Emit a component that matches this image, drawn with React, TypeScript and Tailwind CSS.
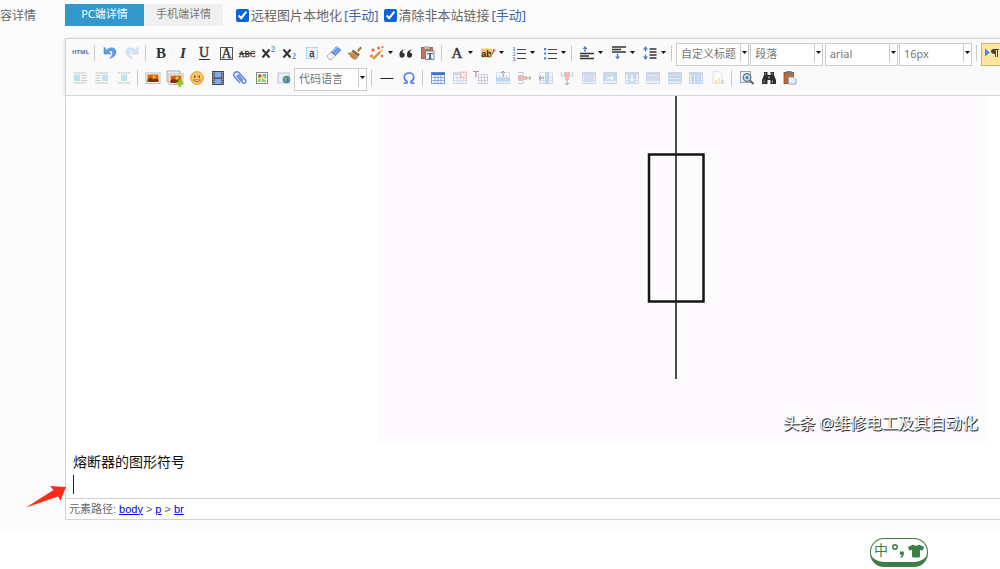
import type { ReactNode } from "react";
import { FaTshirt } from "react-icons/fa";

type Tool = { label: string; icon: ReactNode; menu?: boolean; off?: boolean };

const BLUE = "#4a7fe0";
const INK = "#333333";

function Glyph({ children }: { children: ReactNode }) {
    return (
        <svg viewBox="0 0 16 16" className="h-4 w-4 shrink-0 overflow-visible">
            {children}
        </svg>
    );
}

function Letter({ x = 8, y = 13, size = 15, fill = INK, children, ...rest }: any) {
    return (
        <text x={x} y={y} fontSize={size} fill={fill} textAnchor="middle" fontFamily="Liberation Serif, serif" {...rest}>
            {children}
        </text>
    );
}

function Caret() {
    return (
        <svg viewBox="0 0 5 3" className="h-[3px] w-[5px] shrink-0">
            <path d="M0 0h5L2.5 3z" fill="#111" />
        </svg>
    );
}

// cell grid shared by the table tools
function Grid({ head = "#9fb6dc", line = "#9db4d8", children }: { head?: string; line?: string; children?: ReactNode }) {
    return (
        <Glyph>
            <rect x="1.500" y="2.500" width="13" height="11" fill="#f5f8fd" stroke={line} />
            <rect x="1.500" y="2.500" width="13" height="2.500" fill={head} />
            <path d="M2 7.500h12M2 10.500h12M5 5v8.500M8 5v8.500M11 5v8.500" stroke={line} strokeWidth=".8" />
            {children}
        </Glyph>
    );
}

function AlignBlock({ x, wide }: { x: number; wide?: boolean }) {
    return (
        <Glyph>
            <path d="M1.500 3h13M1.500 13h13" stroke="#999" />
            {!wide && <path d={x < 5 ? "M9 5.500h5.500M9 8h5.500M9 10.500h5.500" : "M1.500 5.500h5M1.500 8h5M1.500 10.500h5"} stroke="#999" />}
            <rect x={x} y="4.500" width="6" height="6.500" fill="#7cd0f2" />
        </Glyph>
    );
}

function Photo({ add }: { add?: boolean }) {
    return (
        <Glyph>
            {add && <path d="M0 1h13v11H0z" fill="#eee" stroke="#999" strokeWidth=".8" />}
            <rect x={add ? 2 : 1} y={add ? 4 : 3} width="14" height="10.500" fill="#fff" stroke="#aaa" strokeWidth=".8" />
            <rect x={add ? 3.5 : 2.5} y={add ? 5.5 : 4.5} width="11" height="7.500" fill="#d8660c" />
            <path d={add ? "M3.500 10.500l3-2 3 2 2-1 3 1V13h-11z" : "M2.500 9.500l3-2 3 2 2-1 3 1V12h-11z"} fill="#7c340a" />
            <circle cx={add ? 10 : 9} cy={add ? 8 : 7} r="1.300" fill="#ffd35c" />
            {add && <path d="M11.500 9.500h2.500V12h2v2.500h-2V17h-2.500v-2.500h-2V12h2z" fill="#8dcc1c" />}
        </Glyph>
    );
}

function Lines({ y }: { y: number }) {
    return <path d={`M1 ${y}h14M1 ${y + 2.5}h9M1 ${y + 5}h14`} stroke={INK} strokeWidth="1.3" />;
}

const historyTools: Tool[] = [
    {
        label: "撤销",
        icon: (
            <Glyph>
                <path d="M2 2v7h7L6.500 6.500Q11 4.500 10.500 8.500 10.200 11.500 7.500 13.500 14.500 11 14 6.500 13 1.500 7 3.200L4.600 5z" fill="#5b9fe6" stroke="#3f82d0" strokeWidth=".5" />
            </Glyph>
        ),
    },
    {
        label: "重做",
        off: true,
        icon: (
            <Glyph>
                <path d="M14 2v7H7l2.500-2.500Q5 4.500 5.500 8.500 5.800 11.500 8.500 13.500 1.500 11 2 6.500 3 1.500 9 3.200L11.400 5z" fill="#a5d0f2" stroke="#7bb6e8" strokeWidth=".5" />
            </Glyph>
        ),
    },
];

const textTools: Tool[] = [
    { label: "加粗", icon: <Glyph><Letter size={15} fontWeight="bold">B</Letter></Glyph> },
    { label: "斜体", icon: <Glyph><Letter size={15} fontWeight="bold" fontStyle="italic">I</Letter></Glyph> },
    {
        label: "下划线",
        icon: (
            <Glyph>
                <Letter y={12} size={14} stroke={INK} strokeWidth=".4">U</Letter>
                <path d="M3 14.500h11" stroke={INK} />
            </Glyph>
        ),
    },
    {
        label: "字符边框",
        icon: (
            <Glyph>
                <rect x="2.500" y="2.500" width="12" height="12" fill="none" stroke="#555" />
                <Letter x={8.5} size={14} stroke={INK} strokeWidth=".3">A</Letter>
            </Glyph>
        ),
    },
    {
        label: "删除线",
        icon: (
            <Glyph>
                <Letter y={11.5} size={8} stroke={INK} strokeWidth=".3">ABC</Letter>
                <path d="M0 8.500h16" stroke={INK} />
            </Glyph>
        ),
    },
    {
        label: "上标",
        icon: (
            <Glyph>
                <path d="M1.500 4.500l7 8M8.500 4.500l-7 8" stroke={INK} strokeWidth="2" />
                <Letter x={12} y={7} size={8} fill={BLUE} fontWeight="bold">2</Letter>
            </Glyph>
        ),
    },
    {
        label: "下标",
        icon: (
            <Glyph>
                <path d="M1.500 4.500l7 8M8.500 4.500l-7 8" stroke={INK} strokeWidth="2" />
                <Letter x={12} y={14} size={8} fill={BLUE} fontWeight="bold">2</Letter>
            </Glyph>
        ),
    },
    {
        label: "清除格式",
        icon: (
            <Glyph>
                <rect x="2.500" y="2.500" width="11" height="11" fill="#eef5ff" stroke="#8bb8f0" strokeDasharray="1.500 1" />
                <Letter y={11.5} size={12} stroke={INK} strokeWidth=".3">a</Letter>
            </Glyph>
        ),
    },
    {
        label: "橡皮擦",
        icon: (
            <Glyph>
                <path d="M1 11l4-4 4.500 3.500-3.500 4H3z" fill="#f4f4f6" stroke="#9aa5b8" strokeWidth=".8" />
                <path d="M5 7l5.500-5.500 4.500 3.500-5.500 5.500z" fill="#6f9fe6" stroke="#5580c8" strokeWidth=".8" />
                <path d="M6 6.500L11 2" stroke="#c4daf8" />
            </Glyph>
        ),
    },
    {
        label: "格式刷",
        icon: (
            <Glyph>
                <path d="M10 5.500l3.500-4 1.500 1.500-3.500 4z" fill="#b4742c" />
                <path d="M6 4.500l7 5-2 2-6.500-4.500z" fill="#8a6a48" />
                <path d="M1 8h3.500l6.500 4-2.500 2.500L5 13z" fill="#d89a50" stroke="#a86d2c" strokeWidth=".6" />
                <path d="M3 8.500l4 5M5.500 9l3.500 4" stroke="#9b6225" strokeWidth=".6" />
            </Glyph>
        ),
    },
    {
        label: "自动排版",
        menu: true,
        icon: (
            <Glyph>
                <path d="M4 14L13 5" stroke="#d79331" strokeWidth="2.400" />
                <path d="M11 7l2-2" stroke="#f4d38c" strokeWidth="2.400" />
                <path d="M4 2.500l.8 1.700 1.700.8-1.700.8L4 7.500l-.8-1.700L1.500 5l1.700-.8z" fill="#e65d3b" />
                <circle cx="9.500" cy="3" r="1.600" fill="#ee7c32" />
                <circle cx="13.500" cy="2" r="1" fill="#e65d3b" />
                <circle cx="2.500" cy="11" r="1.600" fill="#ee7c32" />
                <circle cx="13" cy="11" r="1.200" fill="#e65d3b" />
            </Glyph>
        ),
    },
    {
        label: "引用",
        icon: (
            <Glyph>
                <path d="M7 4.200Q4.500 5 4.300 7.500A2.600 2.600 0 1 1 1.500 10Q1 5 7 4.200zM14.500 4.200Q12 5 11.800 7.500A2.600 2.600 0 1 1 9 10Q8.500 5 14.500 4.200z" fill={INK} />
            </Glyph>
        ),
    },
    {
        label: "纯文本粘贴",
        icon: (
            <Glyph>
                <rect x="1.500" y="2.500" width="11" height="11" fill="#b57a55" stroke="#82482a" strokeWidth=".7" />
                <rect x="4.500" y="1" width="5" height="3" fill="#b8bcc4" />
                <rect x="5.500" y="6" width="8.500" height="8.500" fill="#eef3fb" stroke="#667799" strokeWidth=".8" />
                <Letter x={10} y={13.5} size={9} fontWeight="bold">T</Letter>
            </Glyph>
        ),
    },
];

const colorTools: Tool[] = [
    { label: "字体颜色", menu: true, icon: <Glyph><Letter size={15} stroke={INK} strokeWidth=".4">A</Letter></Glyph> },
    {
        label: "背景色",
        menu: true,
        icon: (
            <Glyph>
                <rect x="1" y="3.500" width="11" height="9" rx="1" fill="#fcc461" />
                <text x="6.500" y="11.500" fontSize="9" fill="#222" textAnchor="middle" fontWeight="bold" fontFamily="Liberation Sans, sans-serif">ab</text>
                <path d="M9.500 12.500l4-6" stroke="#c08850" strokeWidth="1.800" />
                <circle cx="14" cy="5.500" r="1.400" fill="#ec5f52" />
            </Glyph>
        ),
    },
    {
        label: "有序列表",
        menu: true,
        icon: (
            <Glyph>
                <path d="M6 4.500h9M6 8.500h9M6 13.500h9" stroke="#444" />
                <Letter x={3} y={5.5} size={6} fill={BLUE} fontWeight="bold">1</Letter>
                <Letter x={3} y={10.5} size={6} fill={BLUE} fontWeight="bold">2</Letter>
                <Letter x={3} y={15.5} size={6} fill={BLUE} fontWeight="bold">3</Letter>
            </Glyph>
        ),
    },
    {
        label: "无序列表",
        menu: true,
        icon: (
            <Glyph>
                <path d="M6 4.500h9M6 8.500h9M6 13.500h9" stroke="#444" />
                <path d="M2 3h2.200v2.200H2zM2 7.400h2.200v2.200H2zM2 12.300h2.200v2.200H2z" fill={BLUE} />
            </Glyph>
        ),
    },
];

const spacingTools: Tool[] = [
    {
        label: "段前距",
        menu: true,
        icon: (
            <Glyph>
                <Lines y={8.500} />
                <path d="M6 1l2.500 3h-1.800v3H5.300V4H3.500z" fill={BLUE} />
            </Glyph>
        ),
    },
    {
        label: "段后距",
        menu: true,
        icon: (
            <Glyph>
                <Lines y={2} />
                <path d="M6.500 14.500L4 11.500h1.800v-3h1.400v3H9z" fill={BLUE} />
            </Glyph>
        ),
    },
    {
        label: "行间距",
        menu: true,
        icon: (
            <Glyph>
                <path d="M7.500 4h7M7.500 7h7M7.500 10h7M7.500 13h7" stroke={INK} strokeWidth="1.300" />
                <path d="M3.500 1L6 4.500H4.200v2H2.800v-2H1zM3.500 15L1 11.500h1.800v-2h1.400v2H6z" fill={BLUE} />
            </Glyph>
        ),
    },
];

const floatTools: Tool[] = [
    { label: "左浮动", off: true, icon: <AlignBlock x={2} /> },
    { label: "右浮动", off: true, icon: <AlignBlock x={8} /> },
    { label: "居中", off: true, icon: <AlignBlock x={5} wide /> },
];

const insertTools: Tool[] = [
    { label: "单图上传", icon: <Photo /> },
    { label: "多图上传", icon: <Photo add /> },
    {
        label: "表情",
        icon: (
            <Glyph>
                <circle cx="8" cy="8" r="6.300" fill="#fdc85c" stroke="#e58f22" />
                <path d="M5.700 5.500v2.200M10.300 5.500v2.200" stroke="#7b4a10" strokeWidth="1.500" />
                <path d="M4.300 10q3.700 3.500 7.400 0z" fill="#fff" stroke="#a4600f" strokeWidth=".8" />
            </Glyph>
        ),
    },
    {
        label: "视频",
        icon: (
            <Glyph>
                <rect x="2" y="1" width="12" height="14" fill="#444" />
                <path d="M3.200 2v13M12.800 2v13" stroke="#ddd" strokeDasharray="1.200 1" />
                <path d="M4.500 2h7v5.500h-7zM4.500 8.800h7V14h-7z" fill="#86a9ee" />
            </Glyph>
        ),
    },
    {
        label: "附件",
        icon: (
            <Glyph>
                <path d="M4.500 5.500l6 7q1.500 1.500 2.800.3 1.300-1.300 0-3L7 2.800Q5 1 3 2.600T2.300 6.500l5.500 6.300M6 4.500l5 6" fill="none" stroke="#5582e8" strokeWidth="1.400" />
            </Glyph>
        ),
    },
    {
        label: "地图",
        icon: (
            <Glyph>
                <rect x="2.500" y="2.500" width="11" height="11" fill="#fff" stroke="#888" />
                <path d="M4 4h8v8H4z" fill="#8ccf74" />
                <path d="M4 9l4-2 4 3M8 4l-1 8" stroke="#fff3a0" strokeWidth="1.200" fill="none" />
                <path d="M9 4h3v3z" fill="#6aa7ea" />
                <circle cx="6" cy="6" r="1.500" fill="#e34c35" />
            </Glyph>
        ),
    },
    {
        label: "插入框架",
        icon: (
            <Glyph>
                <rect x="2" y="3" width="11" height="10" fill="#eaf0f8" stroke="#b0bac8" strokeWidth=".8" />
                <circle cx="10.500" cy="9.500" r="3.800" fill="#3f85be" />
                <path d="M8 7q3-1 3 1.500T9 12Q7 10 8 7zM12 7l2 2-1.500 2z" fill="#68b36d" />
            </Glyph>
        ),
    },
];

const lineTools: Tool[] = [
    { label: "分隔线", icon: <Glyph><path d="M1.500 8.500h13" stroke="#222" /></Glyph> },
    {
        label: "特殊字符",
        icon: (
            <Glyph>
                <path d="M2.500 13h3.500v-1.500Q3.200 9.800 3.200 7 3.500 3 8 3t4.800 4q0 2.800-2.800 4.500V13h3.500" fill="none" stroke="#4b7cf0" strokeWidth="1.600" />
            </Glyph>
        ),
    },
];

const tableTools: Tool[] = [
    { label: "插入表格", icon: <Grid head="#3d6fd0" line="#7c9cd8" /> },
    {
        label: "删除表格",
        off: true,
        icon: (
            <Grid>
                <rect x="8" y="1.500" width="7" height="7" fill="#ee8c8c" />
                <path d="M9.500 3l4 4M13.500 3l-4 4" stroke="#fff" strokeWidth="1.300" />
            </Grid>
        ),
    },
    {
        label: "表格标题",
        off: true,
        icon: (
            <Glyph>
                <path d="M0 1.500h6M3 1.500v6" stroke="#444" strokeWidth="1.200" />
                <path d="M5.500 4.500h9v9h-9zM5.500 7.500h9M5.500 10.500h9M8.500 4.500v9M11.500 4.500v9" fill="none" stroke="#9aa8bf" />
            </Glyph>
        ),
    },
    {
        label: "前插入行",
        off: true,
        icon: (
            <Grid head="#eef3fb">
                <rect x="1" y="8" width="14" height="3.500" fill="#7db6ef" />
                <path d="M8 7V1M6 3l2-2 2 2" fill="none" stroke="#444" />
            </Grid>
        ),
    },
    {
        label: "删除行",
        off: true,
        icon: (
            <Glyph>
                <path d="M2 2.500h5v3H2M2 13.500h5v-3H2" fill="none" stroke="#999" />
                <rect x="2" y="6" width="9" height="4" fill="#ee7777" />
                <path d="M10 8h5M13 6l2 2-2 2" fill="none" stroke="#555" />
            </Glyph>
        ),
    },
    {
        label: "前插入列",
        off: true,
        icon: (
            <Grid head="#eef3fb">
                <rect x="7" y="2" width="4" height="12" fill="#7db6ef" />
                <path d="M6 8H1M3 6L1 8l2 2" fill="none" stroke="#444" />
            </Grid>
        ),
    },
    {
        label: "删除列",
        off: true,
        icon: (
            <Glyph>
                <path d="M2.500 2v4h3V2M13.500 2v4h-3V2" fill="none" stroke="#999" />
                <rect x="6" y="2" width="4" height="8" fill="#ee7777" />
                <path d="M8 10v5M6 13l2 2 2-2" fill="none" stroke="#555" />
            </Glyph>
        ),
    },
    {
        label: "合并单元格",
        off: true,
        icon: <Grid><rect x="3" y="5" width="10" height="7" fill="#b0c0ec" /></Grid>,
    },
    {
        label: "右合并单元格",
        off: true,
        icon: (
            <Grid>
                <rect x="2" y="5" width="12" height="5.500" fill="#8cc0f0" />
                <path d="M5 8h6M9 6l2 2-2 2" fill="none" stroke="#fff" strokeWidth="1.400" />
            </Grid>
        ),
    },
    {
        label: "下合并单元格",
        off: true,
        icon: (
            <Grid>
                <rect x="4" y="4.500" width="8" height="9" fill="#8cc0f0" />
                <path d="M8 5v6M6 9l2 2 2-2" fill="none" stroke="#fff" strokeWidth="1.400" />
            </Grid>
        ),
    },
    {
        label: "完全拆分单元格",
        off: true,
        icon: <Grid><path d="M2 5.500h12v2H2zM2 8h12v2H2z" fill="#a8aee8" opacity=".8" /></Grid>,
    },
    {
        label: "拆分成行",
        off: true,
        icon: <Grid><path d="M2 5.500h12V8H2zM2 9h12v2.500H2z" fill="#7db6ef" /></Grid>,
    },
    {
        label: "拆分成列",
        off: true,
        icon: <Grid><path d="M3.500 4.500h2.500v9H3.500zM7 4.500h2.500v9H7zM10.500 4.500H13v9h-2.500z" fill="#7db6ef" /></Grid>,
    },
    {
        label: "图表",
        off: true,
        icon: (
            <Glyph>
                <path d="M3 1.500h6l3 3v9H3z" fill="#fafafa" stroke="#ccc" />
                <rect x="5" y="10" width="2" height="4" fill="#f3c59a" />
                <rect x="8" y="8" width="2" height="6" fill="#f4e07c" />
                <rect x="11" y="10" width="3" height="4" fill="#9fd488" />
            </Glyph>
        ),
    },
];

const pageTools: Tool[] = [
    {
        label: "预览",
        icon: (
            <Glyph>
                <rect x="1.500" y="1.500" width="10" height="11" fill="#f2f4f6" stroke="#99a" strokeWidth=".9" />
                <circle cx="8" cy="7.500" r="3.800" fill="#b8e0f4" stroke="#6a747e" strokeWidth="1.300" />
                <circle cx="8" cy="7.500" r="1.500" fill="#3d83b4" />
                <path d="M11 10.500l3.500 3.500" stroke="#59636e" strokeWidth="2" />
            </Glyph>
        ),
    },
    {
        label: "查询替换",
        icon: (
            <Glyph>
                <path d="M3 2h3.500v3h3V2H13v3l2 5v4h-5.500v-4h-3v4H1v-4l2-5z" fill="#2d2d2d" />
                <path d="M3 10.500v2M11.500 10.500v2M4.500 3v1.500M11 3v1.500" stroke="#aaa" />
                <path d="M7 6.500h2v2H7z" fill="#888" />
            </Glyph>
        ),
    },
    {
        label: "粘贴板",
        icon: (
            <Glyph>
                <rect x="2" y="2.500" width="9.500" height="11" fill="#c06a34" stroke="#8b4820" strokeWidth=".8" />
                <rect x="4.500" y="1" width="5" height="3" fill="#777" />
                <path d="M6.500 7h5l2.500 2.500v4.500H6.500z" fill="#e9eff8" stroke="#8796b0" strokeWidth=".8" />
            </Glyph>
        ),
    },
];

function ToolGroup({ tools, className }: { tools: Tool[]; className: string }) {
    return (
        <div className={`flex shrink-0 items-center justify-between ${className}`}>
            {tools.map((t) => (
                <button
                    key={t.label}
                    type="button"
                    aria-label={t.label}
                    disabled={t.off}
                    className="flex items-center gap-[3px] disabled:opacity-50"
                >
                    {t.icon}
                    {t.menu && <Caret />}
                </button>
            ))}
        </div>
    );
}

function Divider({ tight }: { tight?: boolean }) {
    return <span className={`h-4 w-px shrink-0 bg-[#c8cace] ${tight ? "mx-1" : "ml-[5px] mr-[7px]"}`} />;
}

function Combo({ label, value }: { label: string; value: string }) {
    return (
        <div className="flex h-[23px] w-[73px] shrink-0 items-center border border-[#cccccc] bg-white pr-px">
            <select
                aria-label={label}
                className="h-full min-w-0 flex-1 appearance-none bg-transparent pl-1 text-[11px] text-[#777777] outline-none"
            >
                <option>{value}</option>
            </select>
            <span className="flex h-[18px] w-[7px] items-center justify-end self-start border-l border-[#cccccc]">
                <Caret />
            </span>
        </div>
    );
}

function Toolbar() {
    return (
        <div className="overflow-hidden border-y border-l border-[#d4d4d4] bg-[#fafafa] pb-[5px] pt-px shadow-[0_1px_4px_rgba(0,0,0,0.15)]">
            <div className="flex h-[25px] items-center pl-[6px]">
                <button type="button" className="w-[17px] shrink-0 text-center text-[6px] font-bold text-[#3d78b8]">
                    HTML
                </button>
                <Divider />
                <ToolGroup tools={historyTools} className="w-[38px]" />
                <Divider />
                <ToolGroup tools={textTools} className="w-[283px]" />
                <Divider />
                <ToolGroup tools={colorTools} className="w-[117px]" />
                <Divider />
                <ToolGroup tools={spacingTools} className="w-[87px]" />
                <span className="ml-px" />
                <Divider tight />
                <div className="mt-[3px] flex w-[296px] shrink-0 justify-between">
                    <Combo label="自定义标题" value="自定义标题" />
                    <Combo label="段落格式" value="段落" />
                    <Combo label="字体" value="arial" />
                    <Combo label="字号" value="16px" />
                </div>
                <Divider tight />
                <button
                    type="button"
                    aria-label="从左向右输入"
                    className="mt-[3px] flex h-[23px] w-[24px] shrink-0 items-center border border-[#dcac6c] bg-[#ffe69f] pl-[2px]"
                >
                    <Glyph>
                        <path d="M1 2.500l5 4-5 4z" fill="#4b86e8" />
                        <path d="M9.500 3H15v1h-1v7h-1V4h-1v7h-1V8Q7 8 7 5.500T9.500 3z" fill="#444" />
                    </Glyph>
                </button>
            </div>
            <div className="flex h-[25px] items-center pl-[6px]">
                <ToolGroup tools={floatTools} className="w-[60px]" />
                <Divider />
                <ToolGroup tools={insertTools} className="w-[147px]" />
                <div className="ml-[2px] mt-[3px]">
                    <Combo label="代码语言" value="代码语言" />
                </div>
                <Divider tight />
                <ToolGroup tools={lineTools} className="ml-[3px] w-[38px]" />
                <Divider />
                <ToolGroup tools={tableTools} className="w-[296px]" />
                <Divider />
                <ToolGroup tools={pageTools} className="w-[59px]" />
            </div>
        </div>
    );
}

function CheckOption({ id, label }: { id: string; label: string }) {
    return (
        <div className="flex shrink-0 items-center gap-[2px] text-[13px]">
            <input id={id} type="checkbox" defaultChecked className="h-[13px] w-[13px] accent-[#0a62dc]" />
            <label htmlFor={id}>{label}</label>
            <a href="#" className="text-[#3b66a8]">[手动]</a>
        </div>
    );
}

export default function App() {
    return (
        <div className="overflow-hidden bg-white font-['Noto_Sans','Noto_Sans_CJK_SC',sans-serif] text-[#666666]">
            <main className="bg-[#fcfcfc] pb-[11px] pt-[3px]">
                <header className="mb-[12px] flex h-[23px] items-center">
                    <span className="w-[65px] shrink-0 pt-[2px] text-[12px]">容详情</span>
                    <div className="flex shrink-0 text-[11px]">
                        <button type="button" className="h-[22px] w-[79px] bg-[#3399cc] text-white">PC端详情</button>
                        <button type="button" className="h-[22px] w-[79px] bg-[#f0f0f0] text-[#777777]">手机端详情</button>
                    </div>
                    <div className="ml-[13px] flex gap-[5px] pt-[2px]">
                        <CheckOption id="localize" label="远程图片本地化" />
                        <CheckOption id="clean-links" label="清除非本站链接" />
                    </div>
                </header>

                <section className="relative ml-[65px]">
                    <Toolbar />
                    <div className="border-l border-[#d4d4d4] bg-white pb-[3px]">
                        <figure className="relative ml-[312px] mr-[12px] bg-[#fdfbfe]">
                            <svg viewBox="0 0 610 347" className="w-full" role="img" aria-label="熔断器图形符号">
                                <rect x="271" y="58.500" width="54.500" height="147" fill="none" stroke="#161616" strokeWidth="2.500" />
                                <path d="M298 0v283" stroke="#222" strokeWidth="1.600" />
                            </svg>
                            <figcaption className="absolute bottom-[8px] right-[10px] whitespace-nowrap text-[16px] leading-6 text-white [text-shadow:1px_1px_0_#333,0_1px_1px_#444]">
                                头条 @维修电工及其自动化
                            </figcaption>
                        </figure>
                        <div className="pl-[7px] pt-2 text-[14px] leading-[22px] text-[#111111]">
                            <p>熔断器的图形符号</p>
                            <p className="flex h-[22px] items-center">
                                <span className="h-[19px] w-px bg-[#222222]" />
                            </p>
                        </div>
                    </div>
                    <footer className="flex h-[22px] items-center gap-[3px] border-y border-l border-[#d4d4d4] bg-white pl-[3px] font-['Liberation_Sans','Noto_Sans_CJK_SC',sans-serif] text-[11px]">
                        <span>元素路径:</span>
                        <a href="#" className="text-[#0000ee] underline">body</a>
                        <span>&gt;</span>
                        <a href="#" className="text-[#0000ee] underline">p</a>
                        <span>&gt;</span>
                        <a href="#" className="text-[#0000ee] underline">br</a>
                    </footer>
                    <svg viewBox="0 0 42 24" className="absolute bottom-[11px] left-[-40px] h-6 w-[42px]">
                        <path d="M41 2L25 1l3.500 4L1 22.500l32-11 2.500 4z" fill="#ff2a17" />
                    </svg>
                </section>
            </main>

            <div className="flex justify-end pr-[72px] pt-[7px]">
                <div className="flex h-[29px] w-[58px] items-center justify-center gap-[3px] rounded-[14px] border border-b-[5px] border-[#3a7f45] bg-white text-[#3a7f45]">
                    <span className="font-['Liberation_Serif','Noto_Sans_CJK_SC',serif] text-[14px] leading-5">中</span>
                    <svg viewBox="0 0 14 16" className="h-4 w-[14px]">
                        <circle cx="4" cy="4" r="2.200" fill="none" stroke="currentColor" strokeWidth="1.500" />
                        <path d="M9 8.500h3.800v3.200Q12.500 14 9.500 15v-1.300q1.500-.8 1.500-1.900H9z" fill="currentColor" />
                    </svg>
                    <FaTshirt className="h-4 w-4" />
                </div>
            </div>
        </div>
    );
}
